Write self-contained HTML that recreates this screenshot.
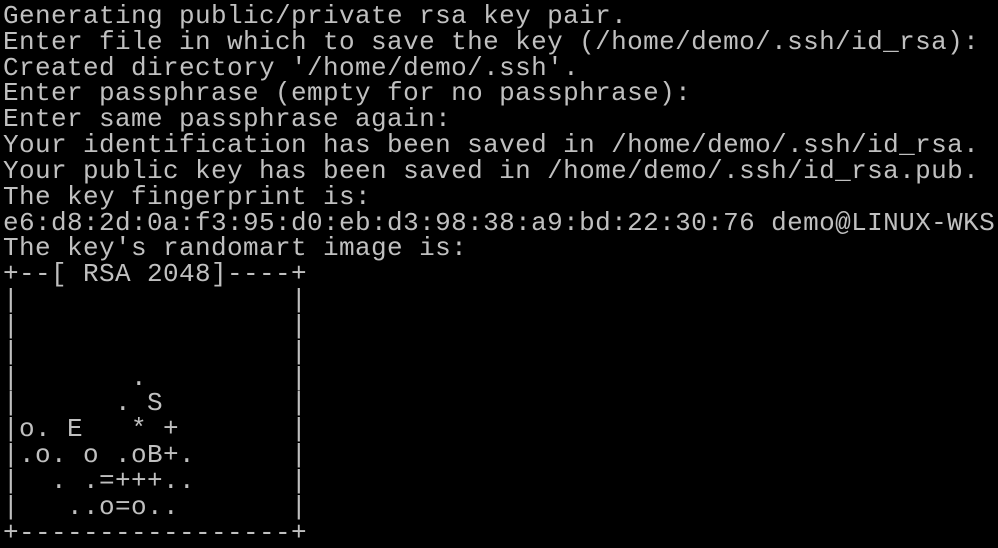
<!DOCTYPE html>
<html><head><meta charset="utf-8"><style>
html,body{margin:0;padding:0;background:#000;width:998px;height:542px;overflow:hidden}
pre{margin:0;position:absolute;left:3px;top:4px;font-family:"Liberation Mono",monospace;font-size:26px;line-height:25.83px;letter-spacing:0.4px;color:#c0c0c0;white-space:pre}
</style></head><body><pre>Generating public/private rsa key pair.
Enter file in which to save the key (/home/demo/.ssh/id_rsa):
Created directory '/home/demo/.ssh'.
Enter passphrase (empty for no passphrase):
Enter same passphrase again:
Your identification has been saved in /home/demo/.ssh/id_rsa.
Your public key has been saved in /home/demo/.ssh/id_rsa.pub.
The key fingerprint is:
e6:d8:2d:0a:f3:95:d0:eb:d3:98:38:a9:bd:22:30:76 demo@LINUX-WKS
The key's randomart image is:
+--[ RSA 2048]----+
|                 |
|                 |
|                 |
|       .         |
|      . S        |
|o. E   * +       |
|.o. o .oB+.      |
|  . .=+++..      |
|   ..o=o..       |
+-----------------+</pre></body></html>
